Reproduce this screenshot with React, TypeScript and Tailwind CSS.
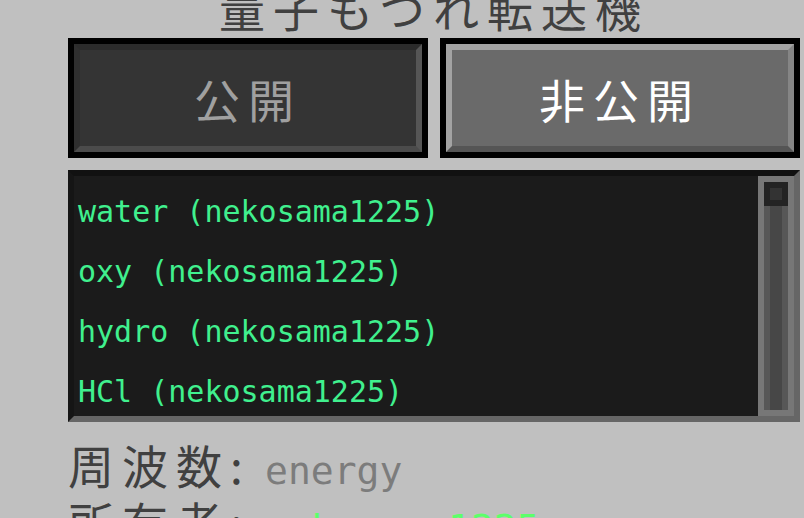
const cjk = "font-['Noto_Sans_CJK_JP','Noto_Sans',sans-serif]";
const mono = "font-['DejaVu_Sans_Mono','Liberation_Mono',monospace]";

const channels = [
  { name: "water", owner: "nekosama1225" },
  { name: "oxy", owner: "nekosama1225" },
  { name: "hydro", owner: "nekosama1225" },
  { name: "HCl", owner: "nekosama1225" },
];

export default function App() {
  return (
    <div className="w-[804px] h-[518px] overflow-hidden bg-[#c0c0c0]">
      <div className="ml-[68px] w-[732px] flex flex-col">
        {/* Title (cut off at the top) */}
        <div
          className={`-mt-[16px] h-[46px] text-center text-[46px] leading-[46px] tracking-[8px] text-[#404040] whitespace-nowrap ${cjk}`}
        >
          量子もつれ転送機
        </div>

        {/* Public / private toggle */}
        <div className="mt-[8px] flex gap-[12px]">
          <div className="w-[360px] h-[120px] border-[6px] border-black">
            <div className="h-full border-[6px] border-t-[#2b2b2b] border-l-[#2e2e2e] border-r-[#565656] border-b-[#4b4b4b] bg-[#343434] flex items-center justify-center">
              <span className={`text-[46px] leading-[46px] tracking-[8px] text-[#a0a0a0] ${cjk}`}>公開</span>
            </div>
          </div>
          <div className="w-[360px] h-[120px] border-[6px] border-black">
            <div className="h-full border-[6px] border-t-[#a3a3a3] border-l-[#a3a3a3] border-r-[#858585] border-b-[#555555] bg-[#6a6a6a] flex items-center justify-center">
              <span className={`text-[46px] leading-[46px] tracking-[8px] text-white ${cjk}`}>非公開</span>
            </div>
          </div>
        </div>

        {/* Channel list */}
        <div className="mt-[12px] h-[252px] border-[6px] border-t-[#111111] border-l-[#151515] border-r-[#666666] border-b-[#666666] bg-[#1b1b1b] flex">
          <div className="flex-1 pt-[6px] pl-[4px]">
            {channels.map((c) => (
              <div
                key={c.name}
                className={`h-[60px] text-[30px] leading-[60px] text-[#40f08e] whitespace-pre ${mono}`}
              >
                {`${c.name} (${c.owner})`}
              </div>
            ))}
          </div>
          {/* Scrollbar */}
          <div className="w-[36px] h-full border-[6px] border-[#777777] bg-[#474747] flex flex-col">
            <div className="flex-1 border-x-[6px] border-[#575757] flex flex-col">
              <div className="-mx-[6px] h-[24px] bg-[#232323] flex items-center justify-center">
                <div className="w-[12px] h-[12px] bg-[#333333]" />
              </div>
            </div>
          </div>
        </div>

        {/* Details */}
        <div className="mt-[19px] flex flex-col">
          <div className="h-[57px] flex items-baseline">
            <span className={`w-[197px] shrink-0 text-[46px] leading-[46px] tracking-[8px] text-[#404040] ${cjk}`}>
              周波数:
            </span>
            <span className={`text-[38px] leading-[46px] text-[#7c7c7c] ${mono}`}>energy</span>
          </div>
          <div className="h-[57px] flex items-baseline">
            <span className={`w-[197px] shrink-0 text-[46px] leading-[46px] tracking-[8px] text-[#404040] ${cjk}`}>
              所有者:
            </span>
            <span className={`text-[38px] leading-[46px] text-[#5dff6a] ${mono}`}>nekosama1225</span>
          </div>
        </div>
      </div>
    </div>
  );
}
